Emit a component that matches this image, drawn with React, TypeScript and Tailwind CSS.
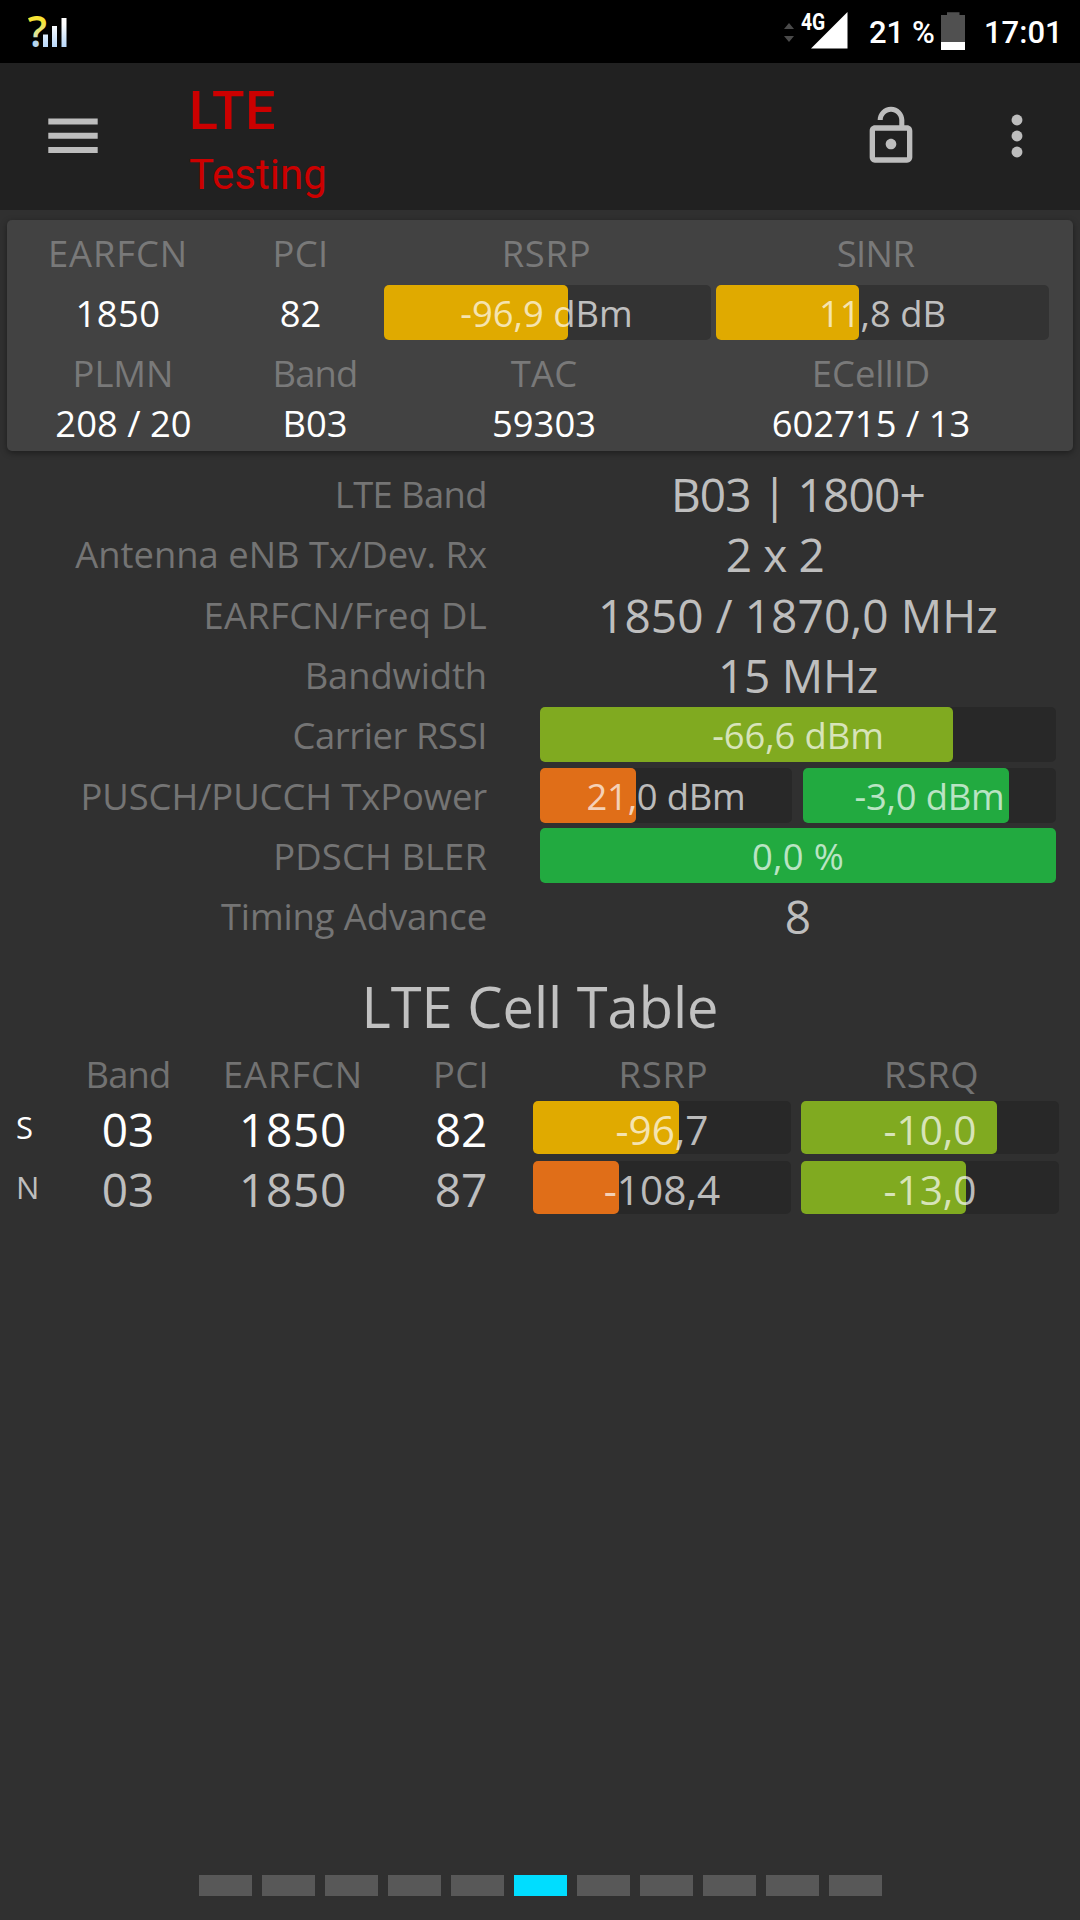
import React from "react";
import clsx from "clsx";

interface MeterProps {
    value: string;
    width: number; // filled part in px
    color: string;
    track?: string;
    className?: string;
}

const YELLOW = "bg-[#e0aa00]";
const ORANGE = "bg-[#e06e18]";
const OLIVE = "bg-[#80aa20]";
const GREEN = "bg-[#22aa40]";

function Meter({ value, width, color, track = "bg-[#282828]", className }: MeterProps) {
    return (
        <div className={clsx("relative flex items-center justify-center rounded-[5px] pt-[2px]", track, className)}>
            <div className={clsx("absolute inset-y-0 left-0 rounded-[5px]", color)} style={{ width }} />
            <span className="relative leading-[51px] text-white/70">{value}</span>
        </div>
    );
}

function StatusBar() {
    return (
        <div className="flex h-[63px] bg-black pl-[28px] font-['Roboto',sans-serif] text-[31px] font-medium text-white">
            <svg className="h-[63px] w-[44px]" viewBox="28 0 44 63">
                <defs>
                    <linearGradient id="question" gradientUnits="userSpaceOnUse" x1="0" y1="15" x2="0" y2="47">
                        <stop offset="0.2" stopColor="#f7e335" />
                        <stop offset="0.6" stopColor="#dfe596" />
                        <stop offset="0.8" stopColor="#b5d5ee" />
                    </linearGradient>
                    <linearGradient id="bars" gradientUnits="userSpaceOnUse" x1="0" y1="18" x2="0" y2="47">
                        <stop offset="0.2" stopColor="#ffffff" />
                        <stop offset="1" stopColor="#b8d8fa" />
                    </linearGradient>
                </defs>
                <text x="27.5" y="46.5" fill="url(#question)" fontFamily="Open Sans, sans-serif" fontSize="43" fontWeight="600">?</text>
                <path d="M43 34.5h5V47h-5zM52 26h5v21h-5zM61.5 18h5v29h-5z" fill="url(#bars)" />
            </svg>
            <div className="relative ml-auto w-[87px]">
                <svg className="h-[63px] w-[88px]" viewBox="782 0 88 63">
                    <path d="M784 29l5-6 5 6zM784 36h10l-5 6z" fill="#4a4a4a" />
                    <path d="M847.5 12v36.5H811z" fill="#fff" />
                </svg>
                <span className="absolute left-[19px] top-[9px] origin-left scale-x-[0.84] text-[23px] font-bold leading-[27px]">4G</span>
            </div>
            <span className="w-[72px] whitespace-nowrap leading-[66px]">21 %</span>
            <svg className="h-[63px] w-[25px]" viewBox="941 0 25 63">
                <path d="M941 15h6v-2.7h12.5V15h5.5v27h-24z" fill="#505050" />
                <path d="M941 42h24v8h-24z" fill="#fff" />
            </svg>
            <span className="ml-[18px] w-[96px] leading-[65px]">17:01</span>
        </div>
    );
}

function Toolbar() {
    return (
        <div className="flex h-[147px] bg-[#212121] pl-[48px] text-[#bdbdbd]">
            <svg className="mt-[55px] h-[36px] w-[50px]" viewBox="0 0 50 36" fill="currentColor">
                <path d="M0.3 0.5h49.4v6H0.3zM0.3 14.7h49.4v6H0.3zM0.3 29h49.4v6H0.3z" />
            </svg>
            <div className="ml-[91px] font-['Roboto',sans-serif] text-[#cc0000]">
                <div className="mt-[17px] text-[53.5px] font-medium leading-[62px] tracking-[0.6px]">LTE</div>
                <div className="mt-[8px] text-[42px] leading-[50px]">Testing</div>
            </div>
            <svg className="ml-auto mr-[61.5px] mt-[40.5px] h-[64px] w-[64px]" viewBox="0 0 24 24" fill="currentColor">
                <path d="M12 17c1.1 0 2-.9 2-2s-.9-2-2-2-2 .9-2 2 .9 2 2 2zm6-9h-1V6c0-2.76-2.24-5-5-5S7 3.24 7 6h1.9c0-1.71 1.39-3.1 3.1-3.1s3.1 1.39 3.1 3.1v2H6c-1.1 0-2 .9-2 2v10c0 1.1.9 2 2 2h12c1.1 0 2-.9 2-2V10c0-1.1-.9-2-2-2zm0 12H6V10h12v10z" />
            </svg>
            <svg className="mr-[31.5px] mt-[40.5px] h-[64px] w-[64px]" viewBox="0 0 24 24" fill="currentColor">
                <circle cx="12" cy="6" r="2.05" />
                <circle cx="12" cy="12" r="2.05" />
                <circle cx="12" cy="18" r="2.05" />
            </svg>
        </div>
    );
}

function ServingCard() {
    return (
        <div className="mx-[7px] mt-[10px] h-[231px] rounded-[5px] bg-[#424242] text-center shadow-[0_2px_6px_rgba(0,0,0,0.4)]">
            <div className="flex h-[65px] items-center pt-[2px] text-[#797979]">
                <span className="w-[222px] tracking-[0.9px]">EARFCN</span>
                <span className="w-[143px] tracking-[0.3px]">PCI</span>
                <span className="ml-[12px] w-[325px] tracking-[0.7px]">RSRP</span>
                <span className="w-[333px] tracking-[-0.6px]">SINR</span>
            </div>
            <div className="flex h-[55px] items-center text-white">
                <span className="w-[222px] pt-[2px] tracking-[0.4px]">1850</span>
                <span className="w-[143px] pt-[2px]">82</span>
                <Meter value="-96,9 dBm" width={183.5} color={YELLOW} track="bg-[#333333]" className="ml-[12px] h-[55px] w-[327px] pr-[2px]" />
                <Meter value="11,8 dB" width={143} color={YELLOW} track="bg-[#333333]" className="ml-[5px] h-[55px] w-[333px]" />
            </div>
            <div className="flex h-[66px] items-center text-[#797979]">
                <span className="w-[232px]">PLMN</span>
                <span className="w-[152px] tracking-[-0.8px]">Band</span>
                <span className="w-[306px] tracking-[0.2px]">TAC</span>
                <span className="w-[348px]">ECellID</span>
            </div>
            <div className="flex h-[34px] items-center text-white">
                <span className="w-[232px] pl-[1px]">208 / 20</span>
                <span className="w-[152px]">B03</span>
                <span className="w-[306px]">59303</span>
                <span className="w-[348px]">602715 / 13</span>
            </div>
        </div>
    );
}

interface DetailRowProps {
    label: string;
    labelClass?: string;
    tall?: boolean;
    children: React.ReactNode;
}

function DetailRow({ label, labelClass, tall, children }: DetailRowProps) {
    return (
        <div className={clsx("flex items-center", tall ? "h-[61px]" : "h-[60px]")}>
            <span className={clsx("w-[487px] whitespace-nowrap pt-[1px] text-right text-[#747474]", labelClass)}>{label}</span>
            <div className="ml-[53px] flex w-[516px] justify-center text-[46px] text-white/70">{children}</div>
        </div>
    );
}

function Details() {
    return (
        <div className="mt-[13px]">
            <DetailRow label="LTE Band" labelClass="tracking-[-0.6px]">
                <span className="tracking-[-0.8px]">B03 | 1800+</span>
            </DetailRow>
            <DetailRow label="Antenna eNB Tx/Dev. Rx">
                <span className="pr-[46px] tracking-[-0.4px]">2 x 2</span>
            </DetailRow>
            <DetailRow label="EARFCN/Freq DL" labelClass="tracking-[0.3px]" tall>
                <span className="tracking-[0.1px]">1850 / 1870,0 MHz</span>
            </DetailRow>
            <DetailRow label="Bandwidth" labelClass="tracking-[-0.1px]">
                <span className="tracking-[-0.2px]">15 MHz</span>
            </DetailRow>
            <DetailRow label="Carrier RSSI" labelClass="tracking-[-0.4px]">
                <Meter value="-66,6 dBm" width={413} color={OLIVE} className="-mt-px h-[55px] w-[516px] text-[36.4px] tracking-[-0.1px]" />
            </DetailRow>
            <DetailRow label="PUSCH/PUCCH TxPower" labelClass="tracking-[-0.1px]" tall>
                <Meter value="21,0 dBm" width={96} color={ORANGE} className="h-[55px] w-[252px] text-[36.4px] tracking-[-0.2px]" />
                <Meter value="-3,0 dBm" width={205.5} color={GREEN} className="ml-[11px] h-[55px] w-[253px] text-[36.4px] tracking-[-0.2px]" />
            </DetailRow>
            <DetailRow label="PDSCH BLER" labelClass="tracking-[0.1px]">
                <Meter value="0,0 %" width={516} color={GREEN} className="-mt-px h-[55px] w-[516px] text-[36.4px] tracking-[0.3px]" />
            </DetailRow>
            <DetailRow label="Timing Advance" labelClass="tracking-[-0.1px]">
                <span>8</span>
            </DetailRow>
        </div>
    );
}

const CELLS = [
    { type: "S", band: "03", earfcn: "1850", pci: "82", rsrp: "-96,7", rsrpWidth: 146, rsrpColor: YELLOW, rsrq: "-10,0", rsrqWidth: 196 },
    { type: "N", band: "03", earfcn: "1850", pci: "87", rsrp: "-108,4", rsrpWidth: 86, rsrpColor: ORANGE, rsrq: "-13,0", rsrqWidth: 165 },
];

function CellTable() {
    return (
        <div className="text-center">
            <h2 className="mt-[26px] text-[56px] leading-[69px] text-white/70">LTE Cell Table</h2>
            <div className="mt-[6px] flex h-[54px] items-center pl-[56px] text-[#727272]">
                <span className="w-[144px] tracking-[-0.8px]">Band</span>
                <span className="w-[186px] tracking-[0.9px]">EARFCN</span>
                <span className="w-[147px] pl-[3px] tracking-[0.3px]">PCI</span>
                <span className="w-[261px] tracking-[0.8px]">RSRP</span>
                <span className="ml-[7px] w-[261px] tracking-[0.5px]">RSRQ</span>
            </div>
            <div className="flex flex-col gap-[7px]">
                {CELLS.map((cell) => (
                    <div
                        key={cell.type}
                        className={clsx("flex h-[53px] items-center pl-[16px] text-[46px]", cell.type === "S" ? "text-white" : "text-white/70")}
                    >
                        <span className="w-[40px] text-left text-[31px]">{cell.type}</span>
                        <span className="w-[144px] pt-[2px]">{cell.band}</span>
                        <span className="w-[186px] pt-[2px] tracking-[0.7px]">{cell.earfcn}</span>
                        <span className="w-[147px] pl-[3px] pt-[2px]">{cell.pci}</span>
                        <Meter value={cell.rsrp} width={cell.rsrpWidth} color={cell.rsrpColor} className="h-[53px] w-[258px] pt-[4px] text-[40.6px]" />
                        <Meter value={cell.rsrq} width={cell.rsrqWidth} color={OLIVE} className="ml-[10px] h-[53px] w-[258px] pt-[4px] text-[40.6px]" />
                    </div>
                ))}
            </div>
        </div>
    );
}

export default function App() {
    return (
        <div className="flex h-[1920px] w-[1080px] flex-col overflow-hidden bg-[#303030] font-['Open_Sans',sans-serif] text-[36.4px] leading-none">
            <StatusBar />
            <Toolbar />
            <ServingCard />
            <Details />
            <CellTable />
            {/* Page indicator, 11 pages */}
            <div className="mb-[24px] mt-auto flex justify-center gap-[10px]">
                {Array.from({ length: 11 }, (_, i) => (
                    <div key={i} className={clsx("h-[21px] w-[53px]", i === 5 ? "bg-[#00ddff]" : "bg-[#585858]")} />
                ))}
            </div>
        </div>
    );
}
